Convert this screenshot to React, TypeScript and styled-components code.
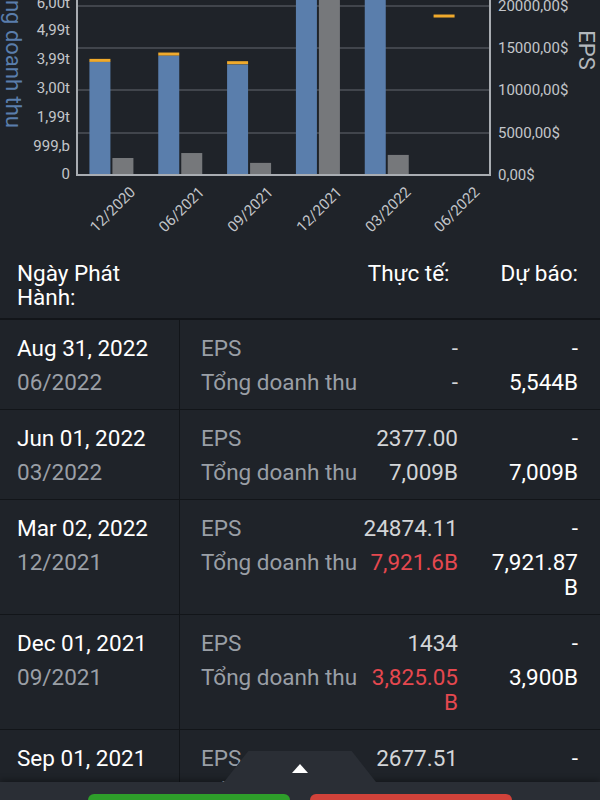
import React from "react";
import styled, { createGlobalStyle } from "styled-components";

const GlobalStyle = createGlobalStyle`
  html, body {
    margin: 0;
    padding: 0;
    background: #1f2329;
  }
  body {
    font-family: Roboto, "Noto Sans", "Liberation Sans", sans-serif;
  }
`;

type Period = {
  label: string;
  revenue?: number; // trillions
  forecast?: number;
  eps?: number;
};

const periods: Period[] = [
  { label: "12/2020", revenue: 3.94, forecast: 3.98, eps: 2012 },
  { label: "06/2021", revenue: 4.15, forecast: 4.2, eps: 2600 },
  { label: "09/2021", revenue: 3.84, forecast: 3.9, eps: 1434 },
  { label: "12/2021", revenue: 7.92, forecast: 7.92, eps: 24874 },
  { label: "03/2022", revenue: 7.01, forecast: 7.01, eps: 2377 },
  { label: "06/2022", forecast: 5.52 },
];

type Tone = "muted" | "bad" | "strong";

type Release = {
  date: string;
  period: string;
  eps: [string, Tone, string];
  revenue: [string, Tone, string];
};

const releases: Release[] = [
  { date: "Aug 31, 2022", period: "06/2022", eps: ["-", "muted", "-"], revenue: ["-", "muted", "5,544B"] },
  { date: "Jun 01, 2022", period: "03/2022", eps: ["2377.00", "muted", "-"], revenue: ["7,009B", "muted", "7,009B"] },
  { date: "Mar 02, 2022", period: "12/2021", eps: ["24874.11", "muted", "-"], revenue: ["7,921.6B", "bad", "7,921.87B"] },
  { date: "Dec 01, 2021", period: "09/2021", eps: ["1434", "muted", "-"], revenue: ["3,825.05B", "bad", "3,900B"] },
  { date: "Sep 01, 2021", period: "06/2021", eps: ["2677.51", "muted", "-"], revenue: ["4,15B", "muted", "4,2B"] },
];

// chart geometry
const X0 = 77;
const X1 = 490;
const BASE = 175;
const step = (X1 - X0) / periods.length;
const revY = (v: number) => BASE - v * 28.8;
const epsY = (v: number) => BASE - v * 0.00845;

const leftTicks = [
  ["6,00t", 3],
  ["4,99t", 30],
  ["3,99t", 59],
  ["3,00t", 88],
  ["1,99t", 117],
  ["999,b", 146],
  ["0", 174],
] as const;

const rightTicks = [
  ["20000,00$", 6],
  ["15000,00$", 48],
  ["10000,00$", 90],
  ["5000,00$", 133],
  ["0,00$", 175],
] as const;

const Chart = () => (
  <ChartSvg width={600} height={250} viewBox="0 0 600 250">
    {[6, 48, 90, 133].map((y) => (
      <line key={y} x1={X0} x2={X1} y1={y} y2={y} stroke="#4e5258" strokeWidth={1.5} />
    ))}

    {periods.map((p, i) => {
      const cx = X0 + step * i + step / 2;
      return (
        <g key={p.label}>
          {p.revenue !== undefined && (
            <rect x={cx - 22} y={Math.max(revY(p.revenue), -2)} width={21} height={BASE - Math.max(revY(p.revenue), -2)} fill="#5a7eac" />
          )}
          {p.forecast !== undefined && revY(p.forecast) > 0 && (
            <rect x={cx - 22} y={revY(p.forecast) - 1.5} width={21} height={3} fill="#f0aa2c" />
          )}
          {p.eps !== undefined && (
            <rect x={cx + 1} y={Math.max(epsY(p.eps), -2)} width={21} height={BASE - Math.max(epsY(p.eps), -2)} fill="#76787b" />
          )}
          <AxisText transform={`translate(${cx + 17},185) rotate(-45)`} textAnchor="end" dominantBaseline="hanging">
            {p.label}
          </AxisText>
        </g>
      );
    })}

    <line x1={X0} x2={X0} y1={0} y2={BASE + 1} stroke="#a9adb2" strokeWidth={2} />
    <line x1={X1} x2={X1} y1={0} y2={BASE + 1} stroke="#a9adb2" strokeWidth={2} />
    <line x1={X0 - 1} x2={X1 + 1} y1={BASE} y2={BASE} stroke="#a9adb2" strokeWidth={2} />

    {leftTicks.map(([t, y]) => (
      <AxisText key={t} x={70} y={y} textAnchor="end" dominantBaseline="central">
        {t}
      </AxisText>
    ))}
    {rightTicks.map(([t, y]) => (
      <AxisText key={t} x={498} y={y} dominantBaseline="central">
        {t}
      </AxisText>
    ))}

    <AxisTitle transform="translate(6,128) rotate(90)" textAnchor="end" fill="#5a7eac">
      Tổng doanh thu
    </AxisTitle>
    <AxisTitle transform="translate(579,50) rotate(90)" textAnchor="middle" fill="#b4b8bd">
      EPS
    </AxisTitle>
  </ChartSvg>
);

const App = () => {
  return (
    <Screen>
      <GlobalStyle />
      <Chart />

      <TableHead>
        <HeadTitle>Ngày Phát Hành:</HeadTitle>
        <HeadLabel>Thực tế:</HeadLabel>
        <HeadLabel>Dự báo:</HeadLabel>
      </TableHead>

      <List>
        {releases.map((r) => (
          <Row key={r.date}>
            <DateCell>
              <DateText>{r.date}</DateText>
              <PeriodText>{r.period}</PeriodText>
            </DateCell>
            <Metrics>
              <MetricLabel>EPS</MetricLabel>
              <Value $tone={r.eps[1]}>{r.eps[0]}</Value>
              <Forecast>{r.eps[2]}</Forecast>
              <MetricLabel>Tổng doanh thu</MetricLabel>
              <Value $tone={r.revenue[1]}>{r.revenue[0]}</Value>
              <Forecast>{r.revenue[2]}</Forecast>
            </Metrics>
          </Row>
        ))}
      </List>

      <Dock>
        <Tab>
          <UpArrow />
        </Tab>
        <ActionButton $kind="buy" />
        <ActionButton $kind="sell" />
      </Dock>
    </Screen>
  );
};

const Screen = styled.div`
  position: relative;
  width: 600px;
  height: 800px;
  overflow: hidden;
  display: flex;
  flex-direction: column;
  background: #1f2329;
  color: #ffffff;
`;

const ChartSvg = styled.svg`
  display: block;
  flex: none;
  font-family: Roboto, "Noto Sans", sans-serif;
`;

const AxisText = styled.text`
  font-size: 15px;
  fill: #c3c6ca;
`;

const AxisTitle = styled.text`
  font-size: 22px;
`;

const TableHead = styled.div`
  flex: none;
  display: grid;
  grid-template-columns: 1fr auto auto;
  column-gap: 51px;
  align-items: start;
  padding: 11px 22px 9px 17px;
  border-bottom: 2px solid #121519;
  font-size: 22.5px;
  line-height: 24px;
`;

const HeadTitle = styled.div`
  max-width: 118px;
`;

const HeadLabel = styled.div`
  white-space: nowrap;
`;

const List = styled.div`
  flex: 1;
  overflow: hidden;
`;

const Row = styled.div`
  display: grid;
  grid-template-columns: 180px 1fr;
  border-bottom: 1px solid #121519;
`;

const DateCell = styled.div`
  display: flex;
  flex-direction: column;
  gap: 9px;
  padding: 16px 0 14px 17px;
  border-right: 1px solid #121519;
  font-size: 22.5px;
  line-height: 25px;
`;

const DateText = styled.div`
  color: #ffffff;
`;

const PeriodText = styled.div`
  color: #9a9fa6;
`;

const Metrics = styled.div`
  min-width: 0;
  display: grid;
  grid-template-columns: 160px 97px 120px;
  row-gap: 9px;
  align-items: start;
  padding: 16px 22px 14px 21px;
  font-size: 22.5px;
  line-height: 25px;
`;

const MetricLabel = styled.div`
  color: #9a9fa6;
  white-space: nowrap;
`;

const toneColor: Record<Tone, string> = {
  muted: "#d3d5d8",
  bad: "#e5484f",
  strong: "#ffffff",
};

const Value = styled.div<{ $tone: Tone }>`
  text-align: right;
  color: ${(p) => toneColor[p.$tone]};
  word-break: break-all;
`;

const Forecast = styled.div`
  padding-left: 24px;
  text-align: right;
  color: #ffffff;
  word-break: break-all;
`;

const Dock = styled.div`
  position: relative;
  flex: none;
  height: 18px;
  display: flex;
  justify-content: center;
  align-items: flex-start;
  gap: 20px;
  padding-top: 12px;
  box-sizing: border-box;
  background: #2a2e35;
  box-shadow: 0 -2px 6px rgba(0, 0, 0, 0.35);
`;

const Tab = styled.div`
  position: absolute;
  bottom: 100%;
  left: 50%;
  transform: translateX(-50%);
  width: 152px;
  height: 31px;
  background: #2a2e35;
  clip-path: polygon(16% 0, 84% 0, 100% 100%, 0 100%);
  display: flex;
  justify-content: center;
  align-items: flex-end;
  padding-bottom: 9px;
  box-sizing: border-box;
`;

const UpArrow = styled.div`
  width: 0;
  height: 0;
  border-left: 8px solid transparent;
  border-right: 8px solid transparent;
  border-bottom: 9px solid #ffffff;
`;

const ActionButton = styled.div<{ $kind: "buy" | "sell" }>`
  width: 202px;
  height: 20px;
  border-radius: 6px 6px 0 0;
  background: ${(p) => (p.$kind === "buy" ? "#2e9e2a" : "#d1423a")};
`;

export default App;
